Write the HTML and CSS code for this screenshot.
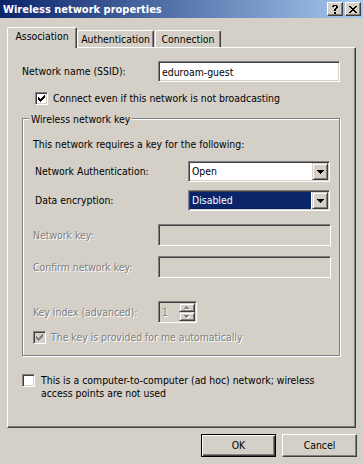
FILE: index.html
```html
<!DOCTYPE html>
<html lang="en">

<head>
	<meta charset="UTF-8" />
	<title>Wireless network properties</title>
	<link rel="stylesheet" href="styles.css">
</head>

<body>

	<div class="window">
		<div class="titlebar">
			<span class="title">Wireless network properties</span>
			<div class="caption-buttons">
				<span class="cap-btn">
					<svg width="6" height="9" viewBox="0 0 6 9" shape-rendering="crispEdges">
						<path d="M1 0h4v1h-4z M0 1h2v1h-2z M4 1h2v2h-2z M3 3h2v1h-2z M2 4h2v2h-2z M2 7h2v2h-2z" fill="#000" />
					</svg>
				</span>
				<span class="cap-btn">
					<svg width="8" height="7" viewBox="0 0 8 7" shape-rendering="crispEdges">
						<path d="M0 0h2v1h-2z M6 0h2v1h-2z M1 1h2v1h-2z M5 1h2v1h-2z M2 2h4v1h-4z M3 3h2v1h-2z M2 4h4v1h-4z M1 5h2v1h-2z M5 5h2v1h-2z M0 6h2v1h-2z M6 6h2v1h-2z" fill="#000" />
					</svg>
				</span>
			</div>
		</div>

		<div class="client">
			<div class="tabs">
				<div class="tab tab-assoc active">Association</div>
				<div class="tab tab-auth">Authentication</div>
				<div class="tab tab-conn">Connection</div>
			</div>

			<div class="panel">
				<div class="row ssid-row">
					<span class="ssid-label">Network name (SSID):</span>
					<div class="field ssid-field"><span class="field-text">eduroam-guest</span></div>
				</div>

				<div class="check-row broadcast-row">
					<span class="checkbox">
						<svg width="13" height="13" viewBox="0 0 13 13" shape-rendering="crispEdges">
							<path d="M3 5h1v3h-1z M4 6h1v3h-1z M5 7h1v3h-1z M6 6h1v3h-1z M7 5h1v3h-1z M8 4h1v3h-1z M9 3h1v3h-1z" fill="#000" />
						</svg>
					</span>
					<span>Connect even if this network is not broadcasting</span>
				</div>

				<div class="group">
					<span class="group-title">Wireless network key</span>
					<p class="group-intro">This network requires a key for the following:</p>

					<div class="row combo-row auth-row">
						<span class="combo-label">Network Authentication:</span>
						<div class="combo">
							<span class="combo-text">Open</span>
							<span class="drop-btn">
								<svg width="7" height="4" viewBox="0 0 7 4" shape-rendering="crispEdges">
									<path d="M0 0h7v1h-7z M1 1h5v1h-5z M2 2h3v1h-3z M3 3h1v1h-1z" fill="#000" />
								</svg>
							</span>
						</div>
					</div>

					<div class="row combo-row enc-row">
						<span class="combo-label">Data encryption:</span>
						<div class="combo">
							<span class="combo-text selected">Disabled</span>
							<span class="drop-btn">
								<svg width="7" height="4" viewBox="0 0 7 4" shape-rendering="crispEdges">
									<path d="M0 0h7v1h-7z M1 1h5v1h-5z M2 2h3v1h-3z M3 3h1v1h-1z" fill="#000" />
								</svg>
							</span>
						</div>
					</div>

					<div class="row key-row">
						<span class="key-label disabled">Network key:</span>
						<div class="field key-field"></div>
					</div>

					<div class="row key-row confirm-row">
						<span class="key-label disabled">Confirm network key:</span>
						<div class="field key-field"></div>
					</div>

					<div class="row index-row">
						<span class="key-label disabled">Key index (advanced):</span>
						<div class="field spinner">
							<span class="spin-text disabled">1</span>
							<span class="spin-btns">
								<span class="spin-btn">
									<svg width="6" height="4" viewBox="0 0 6 4" shape-rendering="crispEdges">
										<path d="M3 1h1v1h-1z M2 2h3v1h-3z M1 3h5v1h-5z" fill="#fff" />
										<path d="M2 0h1v1h-1z M1 1h3v1h-3z M0 2h5v1h-5z" fill="#808080" />
									</svg>
								</span>
								<span class="spin-btn">
									<svg width="6" height="4" viewBox="0 0 6 4" shape-rendering="crispEdges">
										<path d="M1 1h5v1h-5z M2 2h3v1h-3z M3 3h1v1h-1z" fill="#fff" />
										<path d="M0 0h5v1h-5z M1 1h3v1h-3z M2 2h1v1h-1z" fill="#808080" />
									</svg>
								</span>
							</span>
						</div>
					</div>

					<div class="check-row provided-row">
						<span class="checkbox off">
							<svg width="13" height="13" viewBox="0 0 13 13" shape-rendering="crispEdges">
								<path d="M3 5h1v3h-1z M4 6h1v3h-1z M5 7h1v3h-1z M6 6h1v3h-1z M7 5h1v3h-1z M8 4h1v3h-1z M9 3h1v3h-1z" fill="#808080" />
							</svg>
						</span>
						<span class="disabled">The key is provided for me automatically</span>
					</div>
				</div>

				<div class="check-row adhoc-row">
					<span class="checkbox"></span>
					<span>This is a computer-to-computer (ad hoc) network; wireless<br>access points are not used</span>
				</div>
			</div>

			<div class="buttons">
				<button class="btn default">OK</button>
				<button class="btn">Cancel</button>
			</div>
		</div>
	</div>

</body>

</html>
```

FILE: styles.css
```css
* {
	box-sizing: border-box;
	margin: 0;
	padding: 0;
}

body {
	width: 363px;
	height: 464px;
	overflow: hidden;
	background: #d4d0c8;
	font-family: "DejaVu Sans Condensed", "DejaVu Sans", sans-serif;
	font-stretch: condensed;
	font-size: 10.4px;
	line-height: 13px;
	color: #000;
}

/* title bar */

.titlebar {
	height: 18px;
	background: linear-gradient(to right, #0a246a, #a6caf0);
	display: flex;
	align-items: center;
	justify-content: space-between;
	padding: 0 2px 0 3px;
}

.title {
	color: #fff;
	font-weight: bold;
	font-size: 11px;
}

.caption-buttons {
	display: flex;
	gap: 2px;
}

.cap-btn {
	width: 16px;
	height: 14px;
	display: flex;
	align-items: center;
	justify-content: center;
	background: #d4d0c8;
	border: 1px solid;
	border-color: #fff #404040 #404040 #fff;
	box-shadow: inset -1px -1px #808080;
}

/* client area */

.client {
	padding: 9px 7px 0;
}

.tabs {
	display: flex;
	align-items: flex-end;
	height: 20px;
	padding-left: 2px;
}

.tab {
	height: 17px;
	padding-top: 2px;
	text-align: center;
	background: #d4d0c8;
	border: 1px solid;
	border-bottom: none;
	border-color: #fff #404040 #fff #fff;
	border-radius: 2px 2px 0 0;
	box-shadow: inset -1px 0 #808080;
}

.tab.active {
	position: relative;
	z-index: 1;
	height: 21px;
	margin-bottom: -1px;
	padding-top: 2px;
}

.tab-assoc {
	width: 70px;
	margin-left: -2px;
}

.tab-auth {
	width: 77px;
	margin-right: 1px;
}

.tab-conn {
	width: 66px;
}

.panel {
	height: 381px;
	border: 1px solid;
	border-color: #fff #404040 #404040 #fff;
	box-shadow: inset -1px -1px #808080;
	padding: 13px 0 0 14px;
}

.row {
	display: flex;
	align-items: center;
}

/* sunken edit box */

.field {
	border: 1px solid;
	border-color: #808080 #fff #fff #808080;
	box-shadow: inset 1px 1px #404040, inset -1px -1px #d4d0c8;
	padding: 1px;
}

.field-text {
	display: block;
	padding: 3px 0 0 2px;
}

.ssid-row {
	height: 21px;
}

.ssid-label {
	width: 136px;
}

.ssid-field {
	width: 182px;
	height: 21px;
	background: #fff;
}

/* checkboxes */

.check-row {
	display: flex;
	align-items: center;
	gap: 5px;
}

.checkbox {
	width: 13px;
	height: 13px;
	flex: none;
	background: #fff;
	border: 1px solid;
	border-color: #808080 #fff #fff #808080;
	box-shadow: inset 1px 1px #404040, inset -1px -1px #d4d0c8;
}

.checkbox svg {
	display: block;
	margin: -1px;
}

.checkbox.off {
	background: #d4d0c8;
}

.broadcast-row {
	margin: 10px 0 0 13px;
}

/* group box */

.group {
	display: flex;
	flex-direction: column;
	width: 318px;
	height: 238px;
	margin-top: 13px;
	padding-left: 10px;
	border: 1px solid #808080;
	box-shadow: inset 1px 1px #fff, 1px 1px #fff;
}

.group-title {
	align-self: flex-start;
	margin: -6px 0 0 -4px;
	padding: 0 2px;
	background: #d4d0c8;
}

.group-intro {
	margin-top: 12px;
}

.combo-row {
	height: 21px;
}

.auth-row {
	margin-top: 10px;
}

.enc-row {
	margin-top: 8px;
}

.combo-label {
	width: 155px;
	padding-left: 2px;
}

.combo {
	width: 142px;
	height: 21px;
	display: flex;
	background: #fff;
	border: 1px solid;
	border-color: #808080 #fff #fff #808080;
	box-shadow: inset 1px 1px #404040, inset -1px -1px #d4d0c8;
	padding: 1px;
}

.combo-text {
	flex: 1;
	padding: 2px 0 0 2px;
	margin-right: 1px;
}

.combo-text.selected {
	background: #0a246a;
	color: #fff;
}

.drop-btn {
	width: 16px;
	height: 17px;
	display: flex;
	align-items: center;
	justify-content: center;
	background: #d4d0c8;
	border: 1px solid;
	border-color: #d4d0c8 #404040 #404040 #d4d0c8;
	box-shadow: inset 1px 1px #fff, inset -1px -1px #808080;
}

.disabled {
	color: #808080;
	text-shadow: 1px 1px #fff;
}

.key-row {
	height: 22px;
	margin-top: 13px;
}

.confirm-row {
	margin-top: 10px;
}

.key-label {
	width: 125px;
}

.key-field {
	width: 173px;
	height: 22px;
}

.index-row {
	height: 22px;
	margin-top: 23px;
}

.spinner {
	width: 39px;
	height: 22px;
	display: flex;
}

.spin-text {
	flex: 1;
	padding: 3px 0 0 2px;
}

.spin-btns {
	display: flex;
	flex-direction: column;
}

.spin-btn {
	width: 16px;
	height: 9px;
	display: flex;
	align-items: center;
	justify-content: center;
	border: 1px solid;
	border-color: #d4d0c8 #404040 #404040 #d4d0c8;
	box-shadow: inset 1px 1px #fff, inset -1px -1px #808080;
}

.provided-row {
	margin-top: 8px;
}

.adhoc-row {
	align-items: flex-start;
	gap: 6px;
	margin-top: 18px;
}

/* dialog buttons */

.buttons {
	display: flex;
	justify-content: flex-end;
	gap: 6px;
	margin: 6px -1px 0 0;
}

.btn {
	width: 75px;
	height: 23px;
	font: inherit;
	color: #000;
	background: #d4d0c8;
	border: 1px solid;
	border-color: #fff #404040 #404040 #fff;
	box-shadow: inset -1px -1px #808080;
}

.btn.default {
	border-color: #000;
	box-shadow: inset 1px 1px #fff, inset -1px -1px #404040, inset -2px -2px #808080;
}
```
